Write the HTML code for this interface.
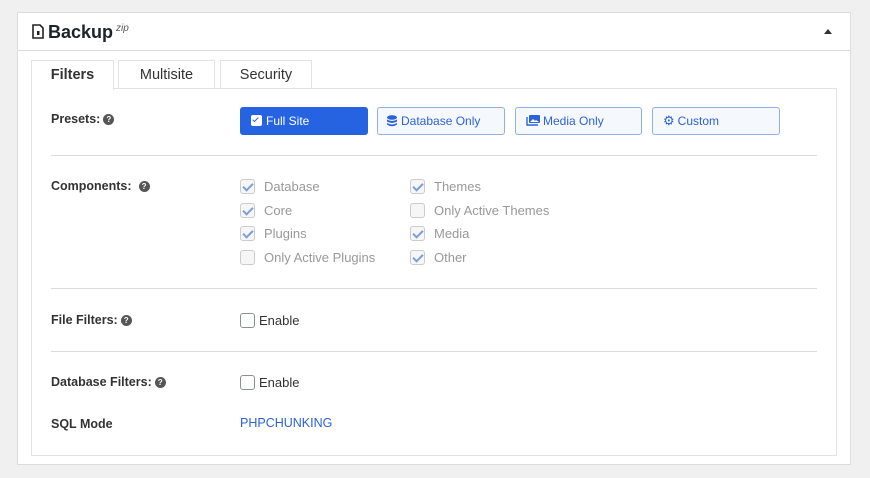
<!DOCTYPE html>
<html><head><style>
*{box-sizing:border-box}
body{margin:0;width:870px;height:478px;background:#f0f0f1;font-family:"Liberation Sans",sans-serif;font-size:13px;color:#1d2327;position:relative;overflow:hidden}
.panel{position:absolute;left:17px;top:12px;width:834px;height:453px;background:#fff;border:1px solid #dcdcde}
.hdr{position:absolute;left:0;top:0;width:100%;height:38px;border-bottom:1px solid #dcdcde}
.title{position:absolute;left:14px;top:9px;font-size:18px;font-weight:bold}
.title sup{font-size:10px;font-weight:normal;font-style:italic;color:#555;margin-left:3px}
.arrow{position:absolute;right:18px;top:16px;width:0;height:0;border-left:4px solid transparent;border-right:4px solid transparent;border-bottom:5px solid #333}
.tab{position:absolute;top:48px;height:29px;border:1px solid #e3e3e3;border-bottom:none;background:#fff;font-size:14.5px;color:#333;text-align:center;line-height:28px}
.box{position:absolute;left:14px;top:76px;width:805px;height:367px;border:1px solid #e3e3e3}
.abs{position:absolute}
.lbl{font-weight:bold;font-size:12.5px;color:#333}
.q{display:inline-block;width:11px;height:11px;border-radius:50%;background:#555;color:#fff;font-size:8px;text-align:center;line-height:11px;vertical-align:1px;margin-left:3px}
.hr{position:absolute;left:51px;width:766px;height:1px;background:#dcdcde}
.btn{position:absolute;top:107px;height:28px;border:1px solid #8fb0e8;border-radius:3px;background:#f5f8fd;color:#2c63d8;font-size:12px;line-height:26px;padding-left:10px}
.cb{position:absolute;width:15px;height:15px;border:1px solid #ccc;border-radius:3px;background:#f6f6f6}
.cb.on::after{content:"";position:absolute;left:4px;top:1px;width:4px;height:8px;border:solid #7aa0d6;border-width:0 2px 2px 0;transform:rotate(45deg)}
.ct{position:absolute;color:#999;font-size:13px}
</style></head><body>
<div class="panel">
 <div class="hdr">
  <div class="title"><svg width="12" height="15" viewBox="0 0 12 15" style="vertical-align:-1px;margin-right:4px"><path d="M1 1h7l3 3v10H1z" fill="none" stroke="#222" stroke-width="1.6"/><rect x="5" y="7" width="2.5" height="4" fill="#222"/></svg>Backup<sup>zip</sup></div>
  <div class="arrow"></div>
 </div>
</div>
<div class="tab" style="left:31px;width:83px;font-weight:bold;height:30px;z-index:2">Filters</div>
<div class="tab" style="left:118px;width:97px;top:60px">Multisite</div>
<div class="tab" style="left:220px;width:92px;top:60px">Security</div>
<style>.tab{top:60px!important}</style>
<div class="abs" style="left:31px;top:88px;width:806px;height:368px;border:1px solid #e3e3e3"></div>

<div class="abs lbl" style="left:51px;top:112px">Presets:<span class="q">?</span></div>
<div class="btn" style="left:240px;width:128px;background:#2563e0;border-color:#2563e0;color:#fff"><span style="display:inline-block;width:11px;height:11px;background:#fff;border-radius:2px;vertical-align:-1px;margin-right:4px;position:relative"><span style="position:absolute;left:3px;top:1px;width:3px;height:6px;border:solid #2563e0;border-width:0 1.5px 1.5px 0;transform:rotate(45deg)"></span></span>Full Site</div>
<div class="btn" style="left:377px;width:128px;padding-left:9px"><svg width="10" height="12" viewBox="0 0 10 12" style="vertical-align:-2px;margin-right:4px"><ellipse cx="5" cy="2.5" rx="5" ry="2.3" fill="#2c63d8"/><path d="M0 4.5q5 3 10 0v2q-5 3-10 0zM0 8q5 3 10 0v1.5q-5 3.5-10 0z" fill="#2c63d8"/></svg>Database Only</div>
<div class="btn" style="left:515px;width:127px"><svg width="14" height="11" viewBox="0 0 14 11" style="vertical-align:-1px;margin-right:3px"><rect x="3" y="0" width="11" height="8" rx="1" fill="#2c63d8"/><path d="M1 2v8h11" fill="none" stroke="#2c63d8" stroke-width="1.4"/><path d="M4 7l3-3 2 2 1-1 3 2z" fill="#fff"/></svg>Media Only</div>
<div class="btn" style="left:652px;width:128px"><span style="font-size:13px;margin-right:3px">⚙</span>Custom</div>

<div class="hr" style="top:155px"></div>
<div class="abs lbl" style="left:51px;top:179px">Components:<span class="q" style="margin-left:7px">?</span></div>
<div class="cb on" style="left:240px;top:179px"></div><div class="ct" style="left:264px;top:179px">Database</div>
<div class="cb on" style="left:240px;top:203px"></div><div class="ct" style="left:264px;top:203px">Core</div>
<div class="cb on" style="left:240px;top:226px"></div><div class="ct" style="left:264px;top:226px">Plugins</div>
<div class="cb" style="left:240px;top:250px"></div><div class="ct" style="left:264px;top:250px">Only Active Plugins</div>
<div class="cb on" style="left:410px;top:179px"></div><div class="ct" style="left:434px;top:179px">Themes</div>
<div class="cb" style="left:410px;top:203px"></div><div class="ct" style="left:434px;top:203px">Only Active Themes</div>
<div class="cb on" style="left:410px;top:226px"></div><div class="ct" style="left:434px;top:226px">Media</div>
<div class="cb on" style="left:410px;top:250px"></div><div class="ct" style="left:434px;top:250px">Other</div>

<div class="hr" style="top:288px"></div>
<div class="abs lbl" style="left:51px;top:313px">File Filters:<span class="q">?</span></div>
<div class="cb" style="left:240px;top:313px;background:#fff;border-color:#8c8f94"></div><div class="abs" style="left:259px;top:313px;color:#333">Enable</div>
<div class="hr" style="top:351px"></div>
<div class="abs lbl" style="left:51px;top:375px">Database Filters:<span class="q">?</span></div>
<div class="cb" style="left:240px;top:375px;background:#fff;border-color:#8c8f94"></div><div class="abs" style="left:259px;top:375px;color:#333">Enable</div>
<div class="abs lbl" style="left:51px;top:417px">SQL Mode</div>
<div class="abs" style="left:240px;top:416px;color:#2c63d8;font-size:12.5px">PHPCHUNKING</div>
</body></html>
